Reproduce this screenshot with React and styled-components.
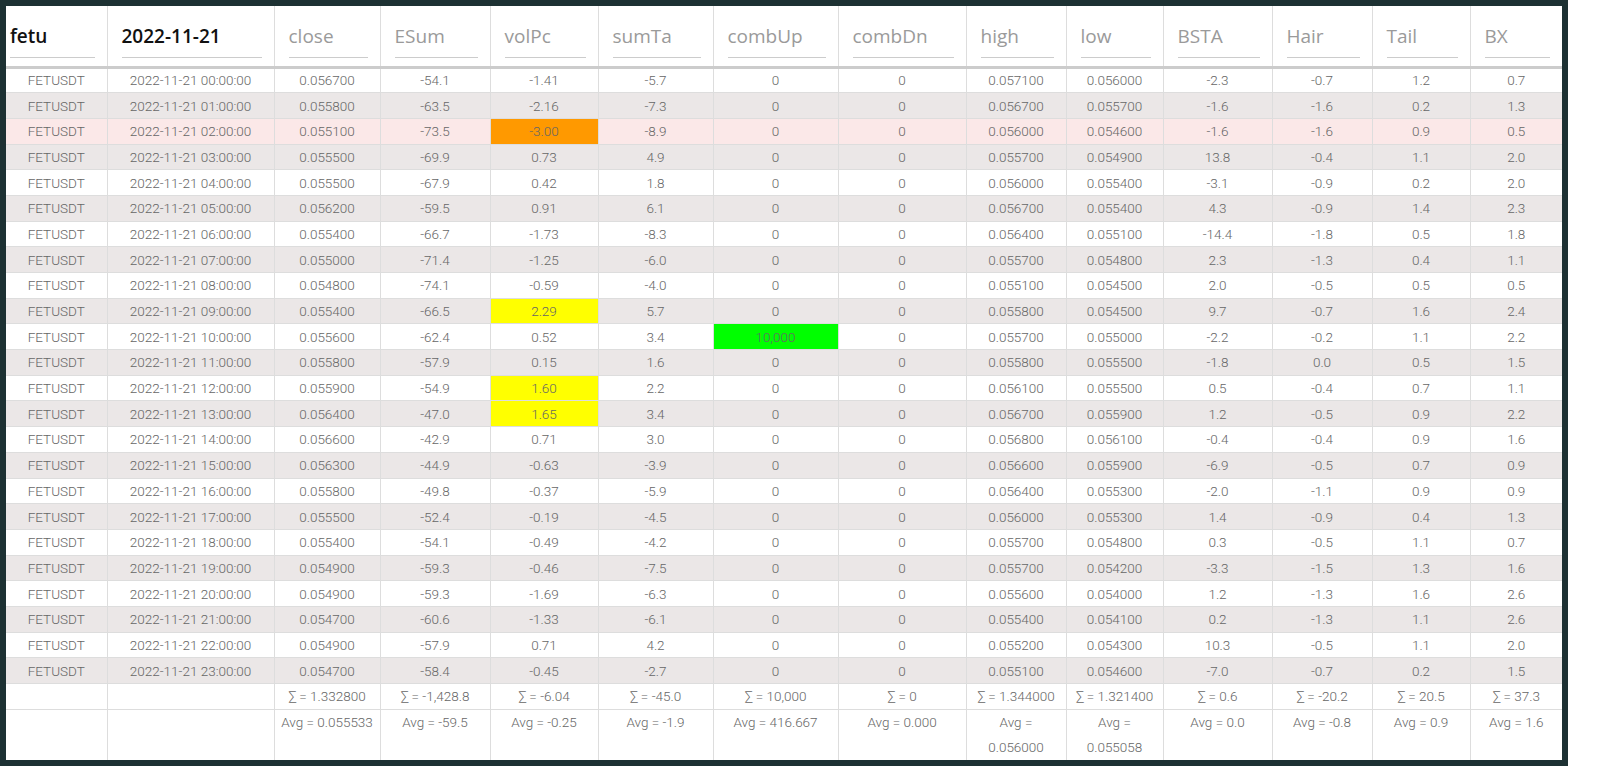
import React from "react";
import styled, { createGlobalStyle } from "styled-components";

const Global = createGlobalStyle`
  body { margin: 0; background: #fff; font-family: Roboto, "Liberation Sans", sans-serif; }
  * { box-sizing: border-box; }
`;

const Frame = styled.div`
  width: 1568px;
  border: 6px solid #1d3133;
`;

const Table = styled.table`
  border-collapse: collapse;
  table-layout: fixed;
  width: 1556px;
  font-size: 13.5px;
  font-weight: 300;
  color: #666;
`;

const Th = styled.th`
  width: ${p => p.$w}px;
  height: 61px;
  padding: 0 12px 0 14px;
  border-right: 1px solid #ddd;
  border-bottom: 3px solid #ccc;
  text-align: left;
  vertical-align: middle;
  &:first-child { padding-left: 4px; }
  &:last-child { border-right: none; }
`;

const HeadLabel = styled.div`
  font-family: "Open Sans", sans-serif;
  font-size: 19px;
  font-weight: ${p => (p.$dark ? 600 : 500)};
  color: ${p => (p.$dark ? "#111" : "#9a9a9a")};
  padding-bottom: 8px;
  border-bottom: 1px solid #ccc;
  margin-top: 10px;
`;

const Tr = styled.tr`
  background: ${p => p.$bg};
`;

const Td = styled.td`
  height: 25.7px;
  padding: 0 3px;
  text-align: center;
  border-right: 1px solid #ddd;
  border-bottom: 1px solid #ddd;
  white-space: nowrap;
  background: ${p => p.$hl || "transparent"};
  &:last-child { border-right: none; }
`;

const FootTd = styled(Td)`
  vertical-align: top;
  white-space: normal;
  line-height: 25px;
  border-bottom: ${p => (p.$last ? "none" : "1px solid #ddd")};
`;

const widths = [101, 167, 106, 110, 108, 115, 125, 128, 100, 97, 109, 100, 98, 92];
const heads = ["fetu", "2022-11-21", "close", "ESum", "volPc", "sumTa", "combUp", "combDn", "high", "low", "BSTA", "Hair", "Tail", "BX"];

const raw = `0.056700 -54.1 -1.41 -5.7 0 0 0.057100 0.056000 -2.3 -0.7 1.2 0.7
0.055800 -63.5 -2.16 -7.3 0 0 0.056700 0.055700 -1.6 -1.6 0.2 1.3
0.055100 -73.5 -3.00 -8.9 0 0 0.056000 0.054600 -1.6 -1.6 0.9 0.5
0.055500 -69.9 0.73 4.9 0 0 0.055700 0.054900 13.8 -0.4 1.1 2.0
0.055500 -67.9 0.42 1.8 0 0 0.056000 0.055400 -3.1 -0.9 0.2 2.0
0.056200 -59.5 0.91 6.1 0 0 0.056700 0.055400 4.3 -0.9 1.4 2.3
0.055400 -66.7 -1.73 -8.3 0 0 0.056400 0.055100 -14.4 -1.8 0.5 1.8
0.055000 -71.4 -1.25 -6.0 0 0 0.055700 0.054800 2.3 -1.3 0.4 1.1
0.054800 -74.1 -0.59 -4.0 0 0 0.055100 0.054500 2.0 -0.5 0.5 0.5
0.055400 -66.5 2.29 5.7 0 0 0.055800 0.054500 9.7 -0.7 1.6 2.4
0.055600 -62.4 0.52 3.4 10,000 0 0.055700 0.055000 -2.2 -0.2 1.1 2.2
0.055800 -57.9 0.15 1.6 0 0 0.055800 0.055500 -1.8 0.0 0.5 1.5
0.055900 -54.9 1.60 2.2 0 0 0.056100 0.055500 0.5 -0.4 0.7 1.1
0.056400 -47.0 1.65 3.4 0 0 0.056700 0.055900 1.2 -0.5 0.9 2.2
0.056600 -42.9 0.71 3.0 0 0 0.056800 0.056100 -0.4 -0.4 0.9 1.6
0.056300 -44.9 -0.63 -3.9 0 0 0.056600 0.055900 -6.9 -0.5 0.7 0.9
0.055800 -49.8 -0.37 -5.9 0 0 0.056400 0.055300 -2.0 -1.1 0.9 0.9
0.055500 -52.4 -0.19 -4.5 0 0 0.056000 0.055300 1.4 -0.9 0.4 1.3
0.055400 -54.1 -0.49 -4.2 0 0 0.055700 0.054800 0.3 -0.5 1.1 0.7
0.054900 -59.3 -0.46 -7.5 0 0 0.055700 0.054200 -3.3 -1.5 1.3 1.6
0.054900 -59.3 -1.69 -6.3 0 0 0.055600 0.054000 1.2 -1.3 1.6 2.6
0.054700 -60.6 -1.33 -6.1 0 0 0.055400 0.054100 0.2 -1.3 1.1 2.6
0.054900 -57.9 0.71 4.2 0 0 0.055200 0.054300 10.3 -0.5 1.1 2.0
0.054700 -58.4 -0.45 -2.7 0 0 0.055100 0.054600 -7.0 -0.7 0.2 1.5`;

const rows = raw.split("\n").map(l => l.trim().split(" "));

const highlights = {
  "2-2": "#ff9900",
  "9-2": "#ffff00",
  "12-2": "#ffff00",
  "13-2": "#ffff00",
  "10-4": "#00ff00",
};

const sums = ["1.332800", "-1,428.8", "-6.04", "-45.0", "10,000", "0", "1.344000", "1.321400", "0.6", "-20.2", "20.5", "37.3"];
const avgs = ["0.055533", "-59.5", "-0.25", "-1.9", "416.667", "0.000", "0.056000", "0.055058", "0.0", "-0.8", "0.9", "1.6"];

const rowBg = i => (i === 2 ? "#fbe8e8" : i % 2 ? "#ebe7e7" : "#fff");

export default function App() {
  return (
    <>
      <Global />
      <Frame>
        <Table>
          <thead>
            <tr>
              {heads.map((h, i) => (
                <Th key={h} $w={widths[i]}>
                  <HeadLabel $dark={i < 2}>{h}</HeadLabel>
                </Th>
              ))}
            </tr>
          </thead>
          <tbody>
            {rows.map((r, i) => (
              <Tr key={i} $bg={rowBg(i)}>
                <Td>FETUSDT</Td>
                <Td>2022-11-21 {String(i).padStart(2, "0")}:00:00</Td>
                {r.map((v, j) => (
                  <Td key={j} $hl={highlights[`${i}-${j}`]}>{v}</Td>
                ))}
              </Tr>
            ))}
            <tr>
              <FootTd />
              <FootTd />
              {sums.map((s, j) => <FootTd key={j}>∑ = {s}</FootTd>)}
            </tr>
            <tr style={{ height: 50 }}>
              <FootTd $last />
              <FootTd $last />
              {avgs.map((a, j) => (
                <FootTd key={j} $last>
                  Avg = {j === 6 || j === 7 ? <><br />{a}</> : a}
                </FootTd>
              ))}
            </tr>
          </tbody>
        </Table>
      </Frame>
    </>
  );
}
